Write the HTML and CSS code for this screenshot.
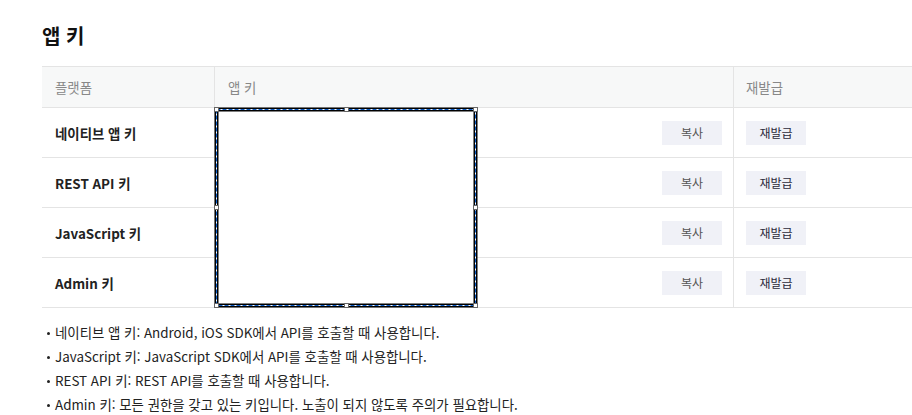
FILE: index.html
```html
<!DOCTYPE html>
<html lang="ko">
<head>
<meta charset="utf-8">
<link rel="stylesheet" href="styles.css">
</head>
<body>
<div class="page">
  <h2 class="title">앱 키</h2>
  <div class="table">
    <div class="row head">
      <div class="cell c1">플랫폼</div>
      <div class="cell c2">앱 키</div>
      <div class="cell c3">재발급</div>
    </div>
    <div class="row">
      <div class="cell c1 name">네이티브 앱 키</div>
      <div class="cell c2 keycell"><button class="btn">복사</button></div>
      <div class="cell c3"><button class="btn reissue">재발급</button></div>
    </div>
    <div class="row">
      <div class="cell c1 name">REST API 키</div>
      <div class="cell c2 keycell"><button class="btn">복사</button></div>
      <div class="cell c3"><button class="btn reissue">재발급</button></div>
    </div>
    <div class="row">
      <div class="cell c1 name">JavaScript 키</div>
      <div class="cell c2 keycell"><button class="btn">복사</button></div>
      <div class="cell c3"><button class="btn reissue">재발급</button></div>
    </div>
    <div class="row">
      <div class="cell c1 name">Admin 키</div>
      <div class="cell c2 keycell"><button class="btn">복사</button></div>
      <div class="cell c3"><button class="btn reissue">재발급</button></div>
    </div>
    <svg class="selection" width="268" height="203" viewBox="0 0 268 203">
      <rect x="3.5" y="2.5" width="259" height="196" fill="#fff" stroke="#000" stroke-width="4"/>
      <rect x="3.5" y="2.5" width="259" height="196" fill="none" stroke="#fff" stroke-width="1"/>
      <rect x="3.5" y="2.5" width="259" height="196" fill="none" stroke="#0a5bc4" stroke-width="1" stroke-dasharray="4 2"/>
      <g fill="#fff" stroke="#666" stroke-width="1">
        <rect x="1.5" y="0.5" width="4" height="4"/>
        <rect x="131.5" y="0.5" width="4" height="4"/>
        <rect x="260.5" y="0.5" width="4" height="4"/>
        <rect x="1.5" y="98.5" width="4" height="4"/>
        <rect x="260.5" y="98.5" width="4" height="4"/>
        <rect x="1.5" y="196.5" width="4" height="4"/>
        <rect x="131.5" y="196.5" width="4" height="4"/>
        <rect x="260.5" y="196.5" width="4" height="4"/>
      </g>
    </svg>
  </div>
  <ul class="notes">
    <li>네이티브 앱 키: Android, iOS SDK에서 API를 호출할 때 사용합니다.</li>
    <li>JavaScript 키: JavaScript SDK에서 API를 호출할 때 사용합니다.</li>
    <li>REST API 키: REST API를 호출할 때 사용합니다.</li>
    <li>Admin 키: 모든 권한을 갖고 있는 키입니다. 노출이 되지 않도록 주의가 필요합니다.</li>
  </ul>
</div>
</body>
</html>
```
FILE: styles.css
```css
html, body {
  margin: 0;
  padding: 0;
  background: #fff;
  overflow: hidden;
}
body {
  font-family: "Noto Sans CJK KR", "Noto Sans", sans-serif;
  color: #222;
  width: 912px;
  height: 415px;
}
.page {
  padding: 21px 0 0 42px;
}
.title {
  margin: 0;
  font-size: 20px;
  line-height: 29px;
  font-weight: 700;
  color: #111;
}
.table {
  position: relative;
  margin-top: 16px;
  width: 880px;
  border-top: 1px solid #e4e4e4;
}
.row {
  display: grid;
  grid-template-columns: 172px 519px 1fr;
  height: 49px;
  border-bottom: 1px solid #e4e4e4;
}
.row.head {
  height: 40px;
  background: #f7f8f8;
}
.cell {
  display: flex;
  align-items: center;
  font-size: 13.4px;
  box-sizing: border-box;
}
.c1 { padding-left: 13px; }
.c2 { padding-left: 13px; border-left: 1px solid #e4e4e4; }
.c3 { padding-left: 12px; border-left: 1px solid #e4e4e4; }
.head .cell {
  color: #888;
}
.name {
  font-weight: 700;
  color: #222;
}
.keycell {
  justify-content: flex-end;
  padding-right: 11px;
}
.btn {
  width: 60px;
  height: 24px;
  border: none;
  background: #f0f1f7;
  font-family: "Noto Sans CJK KR", "Noto Sans", sans-serif;
  font-size: 12px;
  color: #555;
  padding: 0;
}
.btn.reissue {
  color: #2a2a3a;
}
.selection {
  position: absolute;
  left: 171px;
  top: 40px;
}
.notes {
  margin: 12px 0 0;
  padding-left: 13px;
  list-style: none;
  font-size: 13.4px;
  line-height: 24px;
  color: #222;
}
.notes li {
  position: relative;
}
.notes li::before {
  content: "";
  position: absolute;
  left: -8px;
  top: 12px;
  width: 3px;
  height: 3px;
  border-radius: 50%;
  background: #222;
}
```
